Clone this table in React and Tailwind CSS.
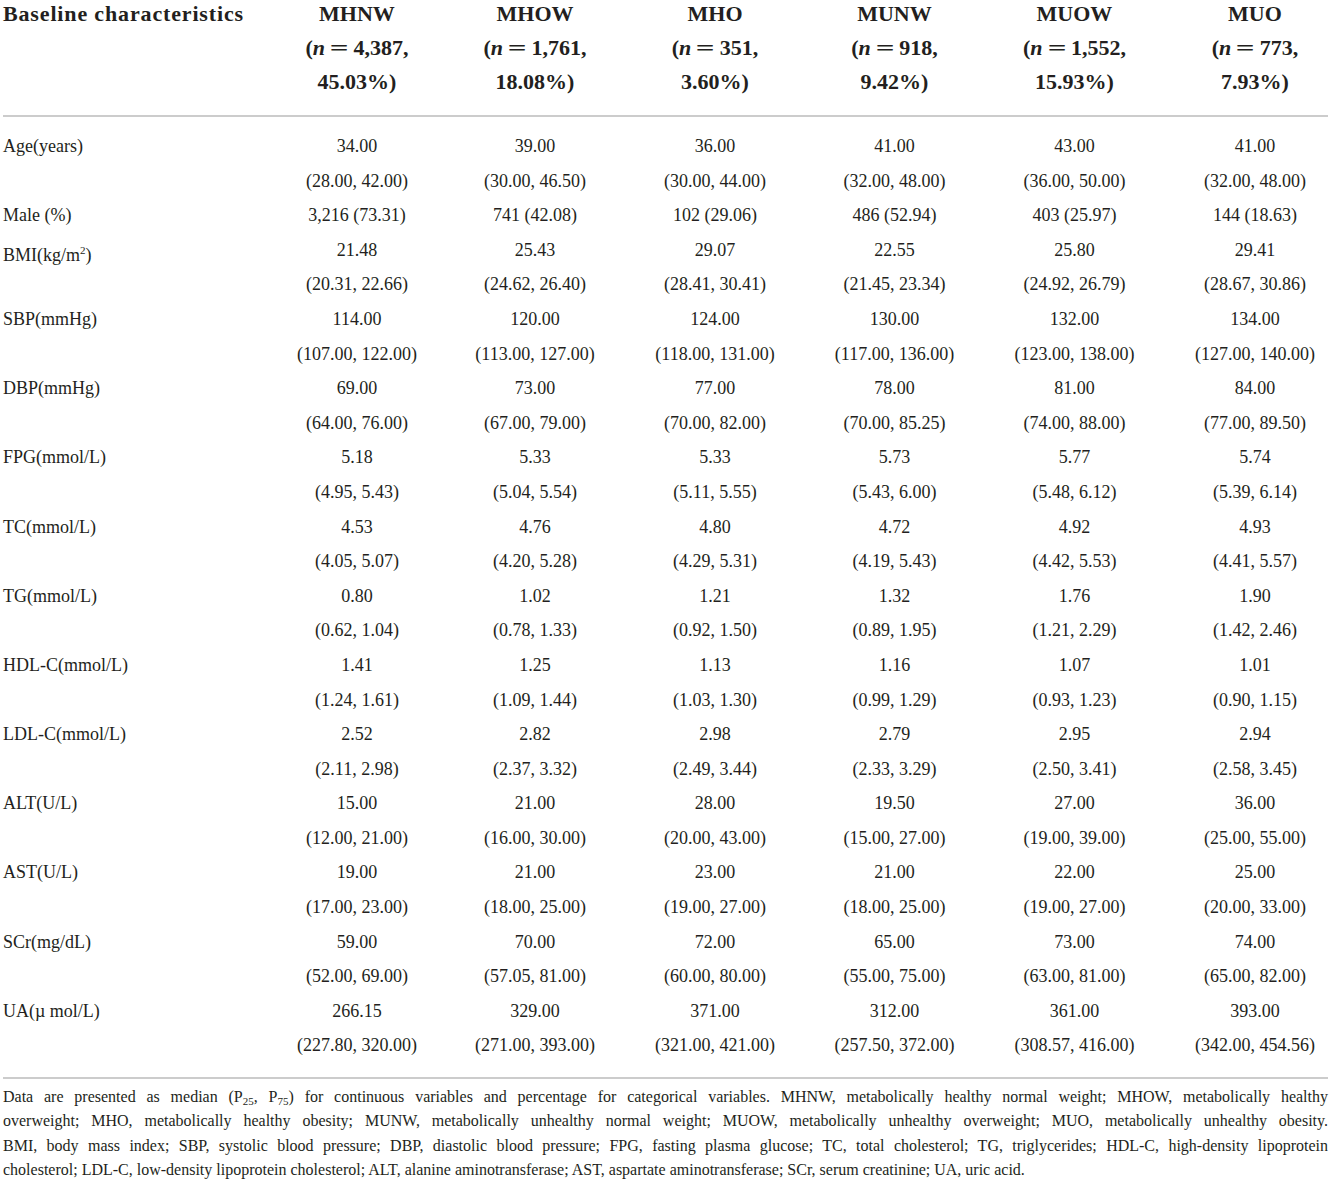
import React from "react";

const cols = [
  { name: "MHNW", n: "4,387", p: "45.03%" },
  { name: "MHOW", n: "1,761", p: "18.08%" },
  { name: "MHO", n: "351", p: "3.60%" },
  { name: "MUNW", n: "918", p: "9.42%" },
  { name: "MUOW", n: "1,552", p: "15.93%" },
  { name: "MUO", n: "773", p: "7.93%" },
];

const rows = [
  { label: "Age(years)", v: [["34.00", "(28.00, 42.00)"], ["39.00", "(30.00, 46.50)"], ["36.00", "(30.00, 44.00)"], ["41.00", "(32.00, 48.00)"], ["43.00", "(36.00, 50.00)"], ["41.00", "(32.00, 48.00)"]] },
  { label: "Male (%)", v: [["3,216 (73.31)"], ["741 (42.08)"], ["102 (29.06)"], ["486 (52.94)"], ["403 (25.97)"], ["144 (18.63)"]] },
  { label: "BMI", v: [["21.48", "(20.31, 22.66)"], ["25.43", "(24.62, 26.40)"], ["29.07", "(28.41, 30.41)"], ["22.55", "(21.45, 23.34)"], ["25.80", "(24.92, 26.79)"], ["29.41", "(28.67, 30.86)"]] },
  { label: "SBP(mmHg)", v: [["114.00", "(107.00, 122.00)"], ["120.00", "(113.00, 127.00)"], ["124.00", "(118.00, 131.00)"], ["130.00", "(117.00, 136.00)"], ["132.00", "(123.00, 138.00)"], ["134.00", "(127.00, 140.00)"]] },
  { label: "DBP(mmHg)", v: [["69.00", "(64.00, 76.00)"], ["73.00", "(67.00, 79.00)"], ["77.00", "(70.00, 82.00)"], ["78.00", "(70.00, 85.25)"], ["81.00", "(74.00, 88.00)"], ["84.00", "(77.00, 89.50)"]] },
  { label: "FPG(mmol/L)", v: [["5.18", "(4.95, 5.43)"], ["5.33", "(5.04, 5.54)"], ["5.33", "(5.11, 5.55)"], ["5.73", "(5.43, 6.00)"], ["5.77", "(5.48, 6.12)"], ["5.74", "(5.39, 6.14)"]] },
  { label: "TC(mmol/L)", v: [["4.53", "(4.05, 5.07)"], ["4.76", "(4.20, 5.28)"], ["4.80", "(4.29, 5.31)"], ["4.72", "(4.19, 5.43)"], ["4.92", "(4.42, 5.53)"], ["4.93", "(4.41, 5.57)"]] },
  { label: "TG(mmol/L)", v: [["0.80", "(0.62, 1.04)"], ["1.02", "(0.78, 1.33)"], ["1.21", "(0.92, 1.50)"], ["1.32", "(0.89, 1.95)"], ["1.76", "(1.21, 2.29)"], ["1.90", "(1.42, 2.46)"]] },
  { label: "HDL-C(mmol/L)", v: [["1.41", "(1.24, 1.61)"], ["1.25", "(1.09, 1.44)"], ["1.13", "(1.03, 1.30)"], ["1.16", "(0.99, 1.29)"], ["1.07", "(0.93, 1.23)"], ["1.01", "(0.90, 1.15)"]] },
  { label: "LDL-C(mmol/L)", v: [["2.52", "(2.11, 2.98)"], ["2.82", "(2.37, 3.32)"], ["2.98", "(2.49, 3.44)"], ["2.79", "(2.33, 3.29)"], ["2.95", "(2.50, 3.41)"], ["2.94", "(2.58, 3.45)"]] },
  { label: "ALT(U/L)", v: [["15.00", "(12.00, 21.00)"], ["21.00", "(16.00, 30.00)"], ["28.00", "(20.00, 43.00)"], ["19.50", "(15.00, 27.00)"], ["27.00", "(19.00, 39.00)"], ["36.00", "(25.00, 55.00)"]] },
  { label: "AST(U/L)", v: [["19.00", "(17.00, 23.00)"], ["21.00", "(18.00, 25.00)"], ["23.00", "(19.00, 27.00)"], ["21.00", "(18.00, 25.00)"], ["22.00", "(19.00, 27.00)"], ["25.00", "(20.00, 33.00)"]] },
  { label: "SCr(mg/dL)", v: [["59.00", "(52.00, 69.00)"], ["70.00", "(57.05, 81.00)"], ["72.00", "(60.00, 80.00)"], ["65.00", "(55.00, 75.00)"], ["73.00", "(63.00, 81.00)"], ["74.00", "(65.00, 82.00)"]] },
  { label: "UA", v: [["266.15", "(227.80, 320.00)"], ["329.00", "(271.00, 393.00)"], ["371.00", "(321.00, 421.00)"], ["312.00", "(257.50, 372.00)"], ["361.00", "(308.57, 416.00)"], ["393.00", "(342.00, 454.56)"]] },
];

function Label({ label }) {
  if (label === "BMI") {
    return (
      <span>
        BMI(kg/m<span className="text-[11px] align-[7px]">2</span>)
      </span>
    );
  }
  if (label === "UA") {
    return <span>UA(µ mol/L)</span>;
  }
  return <span>{label}</span>;
}

const gridCols =
  "grid grid-cols-[266px_176px_180px_180px_179px_181px_1fr]";

export default function App() {
  return (
    <div
      className="w-[1331px] h-[1185px] bg-white text-[#231f20] overflow-hidden"
      style={{ fontFamily: '"Liberation Serif", "Times New Roman", serif' }}
    >
      <div className="px-[3px]">
        {/* header */}
        <div className={`${gridCols} -mt-[3px] font-bold text-[22px] leading-[34px] pb-[16px] border-b-2 border-[#cccccc]`}>
          <div className="tracking-[0.85px] whitespace-nowrap">Baseline characteristics</div>
          {cols.map((c, i) => (
            <div key={c.name} className={`text-center whitespace-nowrap ${i === 5 ? "pl-[17px]" : ""}`}>
              <div>{c.name}</div>
              <div>
                (<span className="italic">n</span>
                <span className="inline-block mx-[8px] scale-x-[1.5]">=</span>
                {c.n},
              </div>
              <div>{c.p})</div>
            </div>
          ))}
        </div>

        {/* body */}
        <div className={`${gridCols} text-[18px] leading-[34.6px] pt-[12px] pb-[14px] border-b-2 border-[#cccccc]`}>
          {rows.map((r) => (
            <React.Fragment key={r.label}>
              <div>
                <Label label={r.label} />
              </div>
              {r.v.map((cell, i) => (
                <div key={i} className={`text-center whitespace-nowrap ${i === 5 ? "pl-[17px]" : ""}`}>
                  {cell.map((t, j) => (
                    <div key={j}>{t}</div>
                  ))}
                </div>
              ))}
            </React.Fragment>
          ))}
        </div>

        {/* footnote */}
        <div className="mt-[6px] text-[16px] leading-[24.4px] whitespace-nowrap">
          <div className="text-justify [text-align-last:justify]">
            Data are presented as median (P<sub className="text-[11px]">25</sub>, P<sub className="text-[11px]">75</sub>) for continuous variables and percentage for categorical variables. MHNW, metabolically healthy normal weight; MHOW, metabolically healthy
          </div>
          <div className="text-justify [text-align-last:justify]">
            overweight; MHO, metabolically healthy obesity; MUNW, metabolically unhealthy normal weight; MUOW, metabolically unhealthy overweight; MUO, metabolically unhealthy obesity.
          </div>
          <div className="text-justify [text-align-last:justify]">
            BMI, body mass index; SBP, systolic blood pressure; DBP, diastolic blood pressure; FPG, fasting plasma glucose; TC, total cholesterol; TG, triglycerides; HDL-C, high-density lipoprotein
          </div>
          <div>
            cholesterol; LDL-C, low-density lipoprotein cholesterol; ALT, alanine aminotransferase; AST, aspartate aminotransferase; SCr, serum creatinine; UA, uric acid.
          </div>
        </div>
      </div>
    </div>
  );
}
